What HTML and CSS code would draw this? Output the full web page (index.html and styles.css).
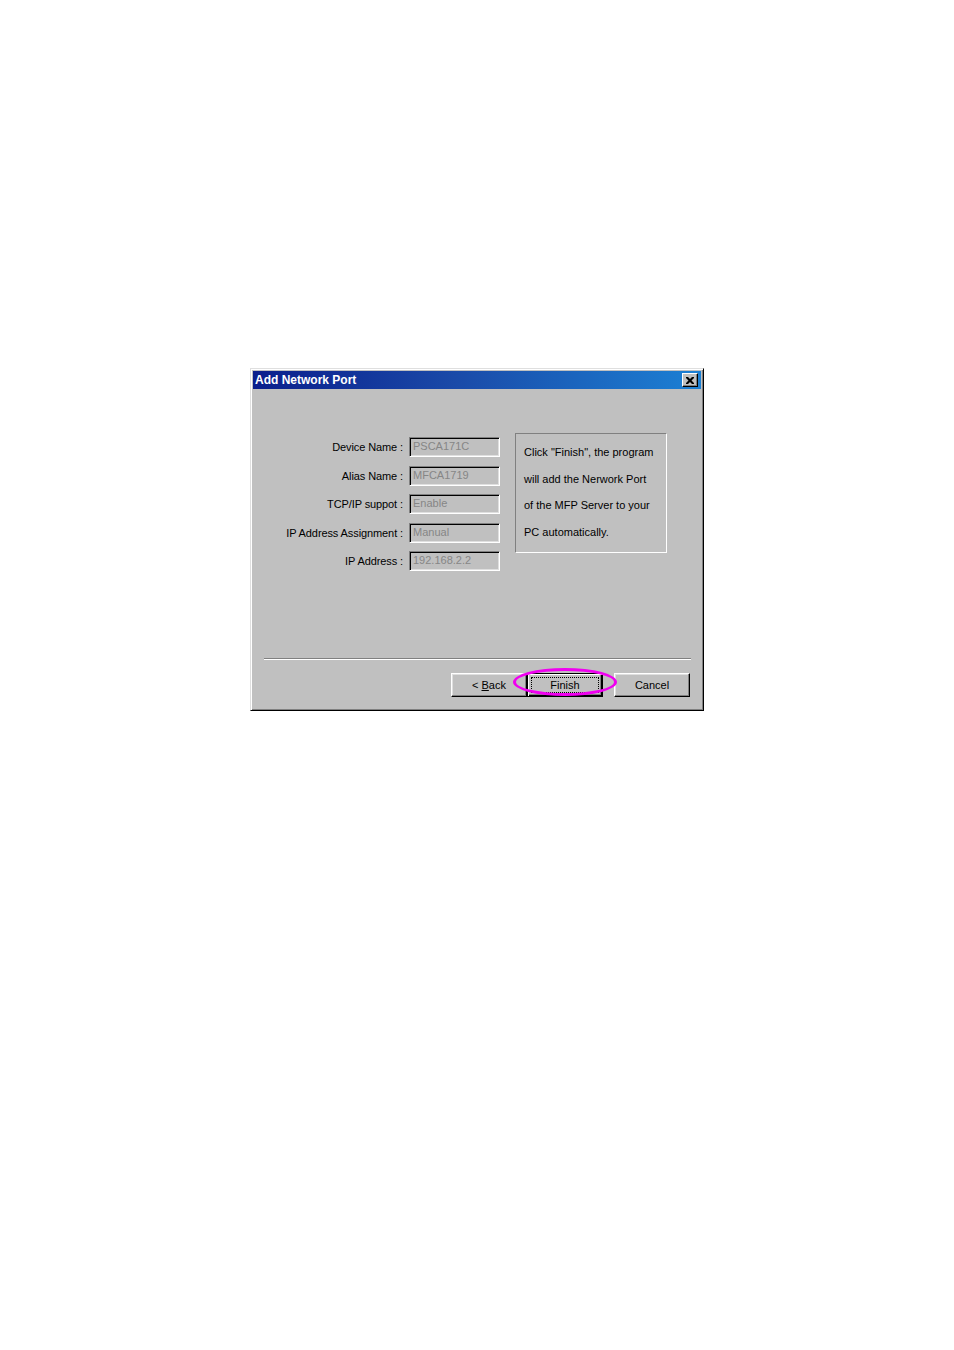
FILE: index.html
```html
<!DOCTYPE html>
<html lang="en">
<head>
    <meta charset="UTF-8">
    <title>Add Network Port</title>
    <link rel="stylesheet" href="styles.css">
</head>
<body>
    <div class="dialog">
        <div class="titlebar">
            <span class="title">Add Network Port</span>
            <button class="close" type="button">
                <svg width="8" height="7" viewBox="0 0 8 7"><path d="M0 0h2l2 2 2-2h2v1l-2.5 2.5L8 6v1H6L4 5 2 7H0V6l2.5-2.5L0 1z" fill="#000"/></svg>
            </button>
        </div>

        <div class="content">
            <div class="fields">
                <label>Device Name :</label>
                <div class="field">PSCA171C</div>
                <label>Alias Name :</label>
                <div class="field">MFCA1719</div>
                <label>TCP/IP suppot :</label>
                <div class="field">Enable</div>
                <label>IP Address Assignment :</label>
                <div class="field">Manual</div>
                <label>IP Address :</label>
                <div class="field">192.168.2.2</div>
            </div>

            <div class="info">
                <p>Click "Finish", the program</p>
                <p>will add the Nerwork Port</p>
                <p>of the MFP Server to your</p>
                <p>PC automatically.</p>
            </div>
        </div>

        <div class="separator"></div>

        <div class="buttons">
            <button type="button" class="btn">&lt; <u>B</u>ack</button>
            <div class="finish-wrap">
                <button type="button" class="btn default">Finish</button>
                <span class="circle"></span>
            </div>
            <button type="button" class="btn cancel">Cancel</button>
        </div>
    </div>
</body>
</html>
```

FILE: styles.css
```css
body {
    margin: 0;
    background: #fff;
    font-family: "Liberation Sans", Arial, sans-serif;
}
.dialog {
    box-sizing: border-box;
    width: 454px;
    height: 343px;
    margin: 368px 0 0 250px;
    background: #c0c0c0;
    border: 1px solid;
    border-color: #dfdfdf #000 #000 #dfdfdf;
    box-shadow: inset 1px 1px #fff, inset -1px -1px #808080;
    padding: 2px;
    display: flex;
    flex-direction: column;
}
.titlebar {
    height: 18px;
    background: linear-gradient(90deg, #0a1e8c, #1a4aa8 45%, #1c80d4);
    display: flex;
    align-items: center;
    justify-content: space-between;
    padding: 0 3px 0 2px;
}
.title {
    color: #fff;
    font-weight: bold;
    font-size: 12px;
}
.close {
    box-sizing: border-box;
    width: 16px;
    height: 14px;
    padding: 0;
    background: #c0c0c0;
    border: 1px solid;
    border-color: #fff #000 #000 #fff;
    box-shadow: inset -1px -1px #808080;
    display: flex;
    align-items: center;
    justify-content: center;
}
.content {
    display: flex;
    align-items: flex-start;
    gap: 15px;
    padding-top: 44px;
    height: 120px;
}
.fields {
    display: grid;
    grid-template-columns: 150px 91px;
    column-gap: 6px;
    row-gap: 8.5px;
    margin-top: 4px;
}
.fields label {
    font-size: 11px;
    letter-spacing: -0.1px;
    text-align: right;
    line-height: 20px;
    color: #000;
}
.field {
    box-sizing: border-box;
    height: 20px;
    border: 1px solid;
    border-color: #808080 #fff #fff #808080;
    box-shadow: inset 1px 1px #000, inset -1px -1px #dfdfdf;
    padding: 0 3px;
    font-size: 11px;
    line-height: 17px;
    color: #868686;
}
.info {
    box-sizing: border-box;
    width: 152px;
    height: 120px;
    border: 1px solid;
    border-color: #808080 #fff #fff #808080;
    padding: 5px 8px;
}
.info p {
    margin: 0;
    font-size: 11px;
    line-height: 26.7px;
    color: #000;
    white-space: nowrap;
}
.separator {
    margin: auto 10px 0 11px;
    border-top: 1px solid #808080;
    border-bottom: 1px solid #fff;
}
.buttons {
    display: flex;
    justify-content: flex-end;
    padding: 13px 11px 11px 0;
}
.btn {
    box-sizing: border-box;
    width: 76px;
    height: 24px;
    background: #c0c0c0;
    border: 1px solid;
    border-color: #fff #000 #000 #fff;
    box-shadow: inset -1px -1px #808080, inset 1px 1px #dfdfdf;
    font-family: "Liberation Sans", Arial, sans-serif;
    font-size: 11px;
    color: #000;
    padding: 0;
}
.finish-wrap {
    position: relative;
}
.default {
    border: 1px solid #000;
    box-shadow: inset 1px 1px #fff, inset -1px -1px #000, inset -2px -2px #808080;
    outline: 1px dotted #000;
    outline-offset: -5px;
}
.circle {
    position: absolute;
    left: -14px;
    top: -5px;
    width: 98px;
    height: 22px;
    border: 3px solid #f000f0;
    border-radius: 50%;
    pointer-events: none;
}
.cancel {
    margin-left: 11px;
}
```
